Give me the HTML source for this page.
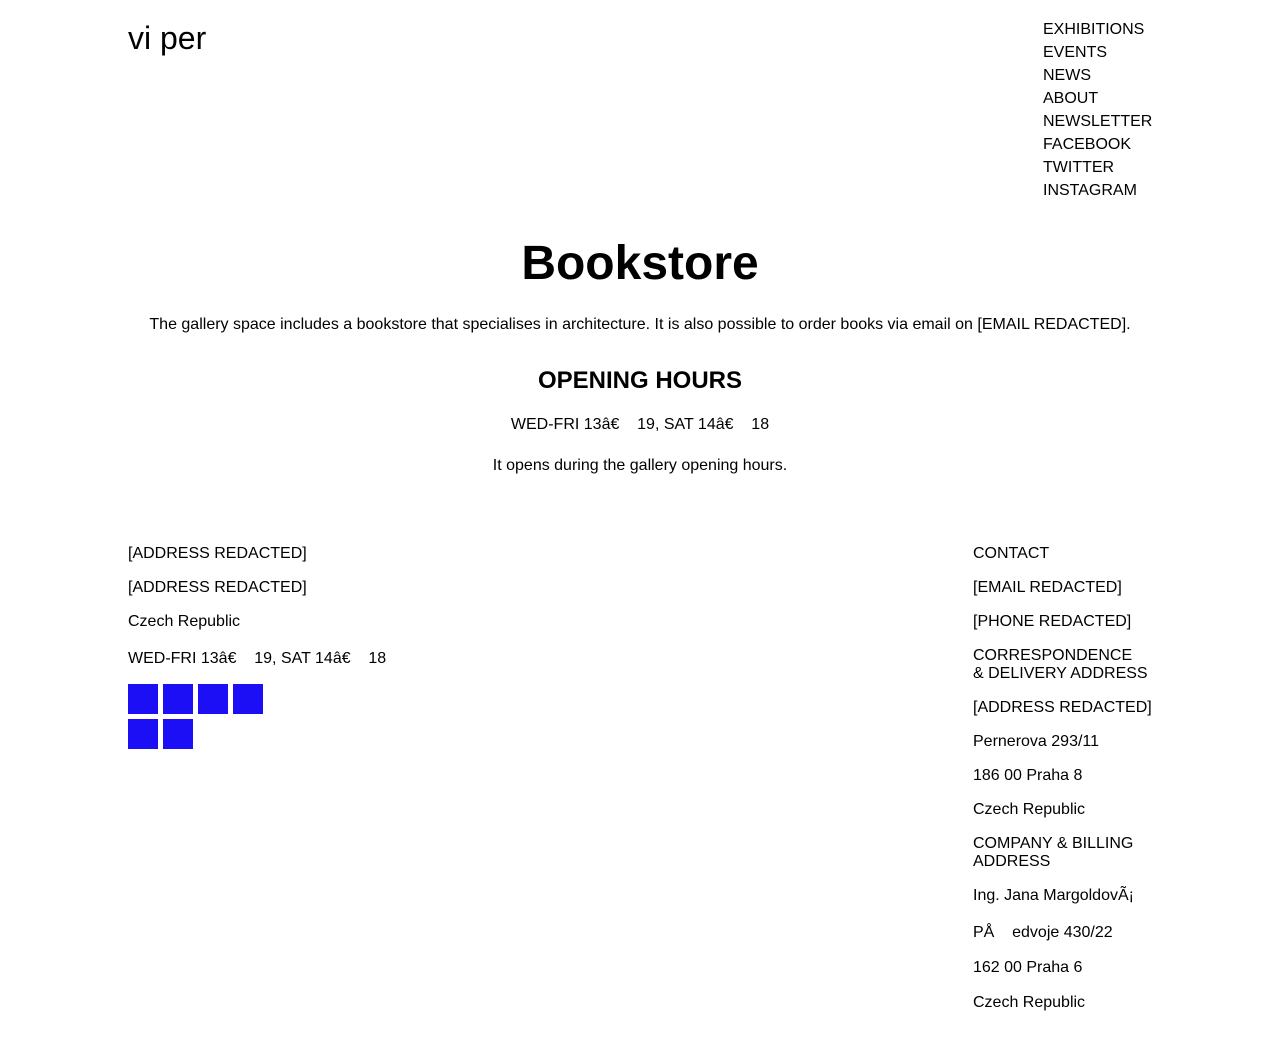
<!DOCTYPE html>
<html><head><meta charset="utf-8"><style>
body{margin:0;width:1280px;height:1046px;background:#fff;color:#000;font-family:"Liberation Sans",Arial,sans-serif;font-size:16px;position:relative;overflow:hidden}
.a{position:absolute;white-space:nowrap;line-height:18px}
.c{position:absolute;left:0;width:1280px;text-align:center;white-space:nowrap}
.sq{position:absolute;width:30px;height:30px;background:#1d0ff5}
</style></head><body>
<div class="a" style="left:128px;top:20px;font-size:32px;line-height:36px">vi per</div>
<div class="a" style="left:1043px;top:18px;line-height:23px">EXHIBITIONS<br>EVENTS<br>NEWS<br>ABOUT<br>NEWSLETTER<br>FACEBOOK<br>TWITTER<br>INSTAGRAM</div>
<div class="c" style="top:236px;font-size:48px;font-weight:bold;line-height:56px">Bookstore</div>
<div class="c" style="top:316px;line-height:18px">The gallery space includes a bookstore that specialises in architecture. It is also possible to order books via email on [EMAIL REDACTED].</div>
<div class="c" style="top:368px;font-size:24px;font-weight:bold;line-height:26px">OPENING HOURS</div>
<div class="c" style="top:416px;line-height:18px">WED-FRI 13â€&nbsp;&nbsp;&nbsp;&nbsp;19, SAT 14â€&nbsp;&nbsp;&nbsp;&nbsp;18</div>
<div class="c" style="top:457px;line-height:18px">It opens during the gallery opening hours.</div>

<div class="a" style="left:128px;top:545px">[ADDRESS REDACTED]</div>
<div class="a" style="left:128px;top:579px">[ADDRESS REDACTED]</div>
<div class="a" style="left:128px;top:613px">Czech Republic</div>
<div class="a" style="left:128px;top:650px">WED-FRI 13â€&nbsp;&nbsp;&nbsp;&nbsp;19, SAT 14â€&nbsp;&nbsp;&nbsp;&nbsp;18</div>
<div class="sq" style="left:128px;top:684px"></div>
<div class="sq" style="left:163px;top:684px"></div>
<div class="sq" style="left:198px;top:684px"></div>
<div class="sq" style="left:233px;top:684px"></div>
<div class="sq" style="left:128px;top:719px"></div>
<div class="sq" style="left:163px;top:719px"></div>

<div class="a" style="left:973px;top:545px">CONTACT</div>
<div class="a" style="left:973px;top:579px">[EMAIL REDACTED]</div>
<div class="a" style="left:973px;top:613px">[PHONE REDACTED]</div>
<div class="a" style="left:973px;top:647px">CORRESPONDENCE<br>&amp; DELIVERY ADDRESS</div>
<div class="a" style="left:973px;top:699px">[ADDRESS REDACTED]</div>
<div class="a" style="left:973px;top:733px">Pernerova 293/11</div>
<div class="a" style="left:973px;top:767px">186 00 Praha 8</div>
<div class="a" style="left:973px;top:801px">Czech Republic</div>
<div class="a" style="left:973px;top:835px">COMPANY &amp; BILLING<br>ADDRESS</div>
<div class="a" style="left:973px;top:887px">Ing. Jana MargoldovÃ¡</div>
<div class="a" style="left:973px;top:924px">PÅ&nbsp;&nbsp;&nbsp;&nbsp;edvoje 430/22</div>
<div class="a" style="left:973px;top:959px">162 00 Praha 6</div>
<div class="a" style="left:973px;top:994px">Czech Republic</div>
</body></html>
